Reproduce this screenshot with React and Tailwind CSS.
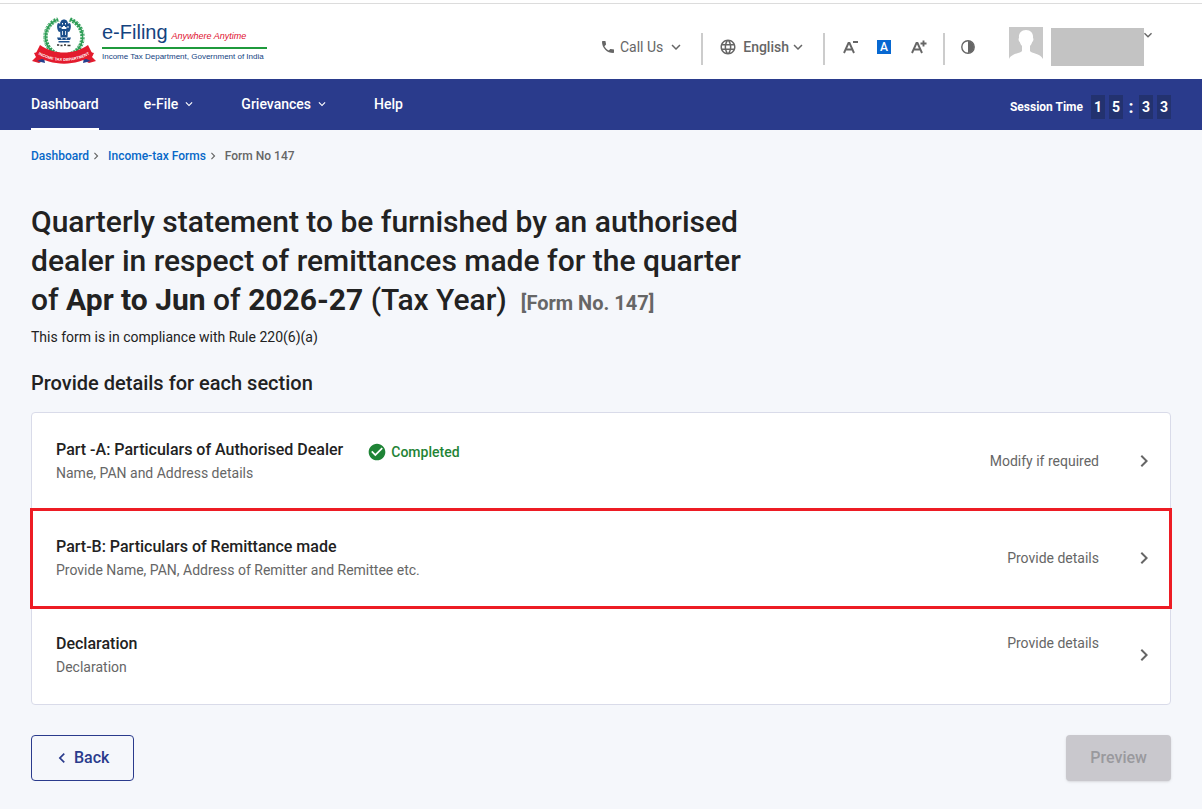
import { MdPhone, MdLanguage, MdCheckCircle, MdChevronLeft, MdChevronRight, MdExpandMore } from "react-icons/md";

const sections = [
  {
    title: "Part -A: Particulars of Authorised Dealer",
    description: "Name, PAN and Address details",
    action: "Modify if required",
    completed: true,
  },
  {
    title: "Part-B: Particulars of Remittance made",
    description: "Provide Name, PAN, Address of Remitter and Remittee etc.",
    action: "Provide details",
    highlighted: true,
  },
  {
    title: "Declaration",
    description: "Declaration",
    action: "Provide details",
    raised: true,
  },
];

function Emblem() {
  return (
    <svg viewBox="0 0 66 48" className="h-12 w-[66px]" role="img" aria-label="Income Tax Department emblem">
      {/* laurel wreath */}
      <circle cx="33" cy="20" r="18.5" fill="none" stroke="#2f9e57" strokeWidth="4.4" strokeDasharray="2.4 0.9" />
      <circle cx="33" cy="20" r="18.6" fill="none" stroke="#2f9e57" strokeWidth="1.4" />
      <circle cx="33" cy="20" r="20" fill="none" stroke="#fff" strokeWidth="0.8" strokeDasharray="1.4 2" />
      <circle cx="33" cy="20" r="17" fill="none" stroke="#fff" strokeWidth="0.7" strokeDasharray="1 2.2" />
      <path d="M25 -2h16l-3 6H28z" fill="#fff" />
      {/* lion capital */}
      <g fill="#1d4f8b">
        <path d="M30 4c1-2 5-2 6 0l1 2-1 4h-6l-1-4z" />
        <path d="M27 6l3 1 1 7-3 1c-2-2-2.500-7-1-9zM39 6l-3 1-1 7 3 1c2-2 2.500-7 1-9z" />
        <path d="M29 12h8l-.5 8h-7z" />
        <path d="M26 20.500h14l-1 2.500H27zM27.500 24h11v1.500h-11z" />
      </g>
      <path
        d="M31 6h1v1.500h-1zM34 6h1v1.500h-1zM32 9h2v1.500h-2zM31 14h.8v4H31zM34.200 14h.8v4h-.8zM28.500 9h1v2h-1zM36.500 9h1v2h-1zM30 21.200h1.500v1H30zM34.500 21.200H36v1h-1.500z"
        fill="#fff"
      />
      <path d="M26 28h2.200M29.500 28.500h2M33 28h2M36.500 28.500h3" stroke="#333" strokeWidth="1.400" />
      {/* ribbon */}
      <path d="M1 44l4-4-2-4 8-2 3 9-6 3zM65 44l-4-4 2-4-8-2-3 9 6 3z" fill="#e31b2d" />
      <path d="M6 44l8 2-1-5zM60 44l-8 2 1-5z" fill="#24408e" />
      <path d="M9 28c14 10 34 10 48 0l5 10c-17 11.500-41 11.500-58 0z" fill="#e31b2d" />
      <path id="ribbon-line" d="M6 36.500c16 10 38 10 54 0" fill="none" />
      <text fill="#fff" fontSize="4" fontWeight="700" fontFamily="Liberation Sans, sans-serif">
        <textPath href="#ribbon-line" startOffset="50%" textAnchor="middle">
          INCOME TAX DEPARTMENT
        </textPath>
      </text>
    </svg>
  );
}

function Logo() {
  return (
    <a href="#" className="flex items-start font-['Liberation_Sans',sans-serif] text-[#14437f]">
      <Emblem />
      <span className="ml-[5px] mt-1 flex w-[165px] flex-col">
        <span className="flex items-baseline gap-1 border-b-2 border-[#1f9a3c] text-xl leading-[22px]">
          e-Filing
          <em className="text-[9px] text-[#e01030]">Anywhere Anytime</em>
        </span>
        <span className="whitespace-nowrap text-[8px] leading-4">Income Tax Department, Government of India</span>
      </span>
    </a>
  );
}

function Separator() {
  return <span className="mx-4 mt-1 h-8 w-0.5 bg-[#ccc]" />;
}

function Header() {
  return (
    <header className="mt-[3px] flex h-[76px] justify-between border-t border-[#dcdcdc] bg-white pl-[31px] pr-[46px] text-sm text-[#666]">
      <div className="pt-[13px]">
        <Logo />
      </div>
      <div className="flex items-center pt-2.5">
        <button type="button" className="flex items-center">
          <MdPhone className="mr-1 size-4" />
          Call Us
          <MdExpandMore className="ml-1 size-[18px]" />
        </button>
        <Separator />
        <button type="button" className="flex items-center font-medium">
          <MdLanguage className="mr-1.5 size-[18px]" />
          English
          <MdExpandMore className="size-[18px]" />
        </button>
        <Separator />
        <button type="button" aria-label="Decrease text size" className="ml-0.5 mr-[18px]">
          <svg viewBox="0 0 16 14" className="h-3.5 w-4" fill="none" stroke="currentColor" strokeWidth="1.900">
            <path d="M1 13L5.500 3h1L11 13M3 9.500h6M10 2h5" />
          </svg>
        </button>
        <button
          type="button"
          className="flex size-3.5 items-center justify-center bg-[#0768d1] text-xs font-medium text-white"
        >
          A
        </button>
        <button type="button" aria-label="Increase text size" className="ml-5">
          <svg viewBox="0 0 16 14" className="h-3.5 w-4" fill="none" stroke="currentColor" strokeWidth="1.900">
            <path d="M1 13L5.500 3h1L11 13M3 9.500h6M9.500 3.500h6M12.500 .5v6" />
          </svg>
        </button>
        <Separator />
        <button type="button" aria-label="Contrast">
          <svg viewBox="0 0 14 14" className="size-3.5">
            <circle cx="7" cy="7" r="6.200" fill="none" stroke="currentColor" strokeWidth="1.400" />
            <path d="M7 1a6 6 0 0 1 0 12z" fill="currentColor" />
          </svg>
        </button>
        <button type="button" aria-label="Profile" className="ml-[34px] flex items-start">
          <svg viewBox="0 0 34 34" className="size-[34px]">
            <path d="M0 0h34v34H0z" fill="#c8c8c8" />
            <path
              d="M17 3c-5 0-7.500 3.500-7 8-.8.500-.5 3.500.8 4 .5 2 1.500 3 2.200 4v5c-1 2.500-10 2-13 8v2h34v-2c-3-6-12-5.500-13-8v-5c.7-1 1.700-2 2.200-4 1.300-.5 1.600-3.500.8-4 .5-4.500-2-8-7-8z"
              fill="#fff"
            />
          </svg>
          <span className="ml-2 mt-px h-[38px] w-[93px] bg-[#c3c3c3]" />
          <MdExpandMore className="-ml-1 size-4" />
        </button>
      </div>
    </header>
  );
}

function Digit({ value }) {
  return <span className="w-3.5 bg-[#23326f] text-center text-sm font-bold leading-6">{value}</span>;
}

function Nav() {
  return (
    <nav className="flex h-[51px] items-stretch justify-between bg-[#2a3b8c] px-[31px] text-sm font-medium text-white">
      <div className="flex gap-[45px]">
        <a href="#" className="flex items-center border-b-2 border-white">
          Dashboard
        </a>
        <button type="button" className="flex items-center gap-1 border-b-2 border-transparent">
          e-File
          <MdExpandMore className="size-3.5" />
        </button>
        <button type="button" className="flex items-center gap-1 border-b-2 border-transparent">
          Grievances
          <MdExpandMore className="size-3.5" />
        </button>
        <a href="#" className="flex items-center border-b-2 border-transparent">
          Help
        </a>
      </div>
      <div className="flex items-center gap-1 pt-1 text-xs font-bold">
        <span className="mr-1">Session Time</span>
        <Digit value="1" />
        <Digit value="5" />
        <span className="w-2 text-center text-lg leading-4">:</span>
        <Digit value="3" />
        <Digit value="3" />
      </div>
    </nav>
  );
}

function SectionRow({ section }) {
  return (
    <li className={section.highlighted ? "outline-3 -outline-offset-1 outline-[#ed1c24]" : ""}>
      <button type="button" className="flex h-[97px] w-full items-center justify-between pb-px pl-6 pr-3.5 text-left">
        <span className="flex items-start gap-6">
          <span>
            <span className="block text-base font-medium text-[#222]">{section.title}</span>
            <span className="block text-sm leading-[22px] text-[#666]">{section.description}</span>
          </span>
          {section.completed && (
            <span className="flex items-center gap-1 text-sm font-medium leading-7 text-[#1f8436]">
              <MdCheckCircle className="size-5" />
              Completed
            </span>
          )}
        </span>
        <span className="flex items-center gap-[33px] text-sm text-[#666]">
          <span className={section.raised ? "pb-6" : ""}>{section.action}</span>
          <MdChevronRight className="size-6" />
        </span>
      </button>
    </li>
  );
}

export default function App() {
  return (
    <div className="flex min-h-screen flex-col bg-white font-[Roboto,sans-serif]">
      <Header />
      <Nav />
      <main className="grow bg-[#f5f7fb] px-[31px] pb-7 pt-[18px] text-[#222]">
        <div className="flex items-center text-xs font-medium">
          <a href="#" className="text-[#0768c8]">Dashboard</a>
          <MdChevronRight className="mr-[5px] size-3.5 text-[#666]" />
          <a href="#" className="text-[#0768c8]">Income-tax Forms</a>
          <MdChevronRight className="mr-[5px] size-3.5 text-[#666]" />
          <span className="text-[#666]">Form No 147</span>
        </div>
        <h1 className="mt-[38px] max-w-[720px] text-3xl font-medium leading-[39px]">
          Quarterly statement to be furnished by an authorised dealer in respect of remittances made for the quarter
          of <b>Apr to Jun</b> of <b>2026-27</b> (Tax Year)
          <span className="ml-3.5 text-xl font-bold text-[#666]">[Form No. 147]</span>
        </h1>
        <p className="mt-2 text-sm">This form is in compliance with Rule 220(6)(a)</p>
        <h2 className="mt-[22px] text-xl font-medium">Provide details for each section</h2>
        <ul className="mt-[15px] rounded border border-[#d9dbe9] bg-white">
          {sections.map((section) => (
            <SectionRow key={section.title} section={section} />
          ))}
        </ul>
        <div className="mt-[30px] flex justify-between font-medium">
          <button
            type="button"
            className="flex h-[46px] items-center rounded border border-[#2a3b8c] pl-5 pr-6 text-[#2a3b8c]"
          >
            <MdChevronLeft className="mr-0.5 size-5" />
            Back
          </button>
          <button type="button" disabled className="h-[46px] rounded bg-[#c9c8cd] px-6 text-[#99999d] shadow">
            Preview
          </button>
        </div>
      </main>
    </div>
  );
}
